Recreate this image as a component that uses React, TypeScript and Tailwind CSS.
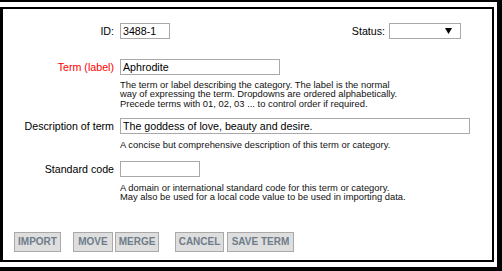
import React from 'react'

const font = { fontFamily: '"Liberation Sans", Arial, sans-serif' }

const Field = ({ label, red, children }: { label: string; red?: boolean; children: React.ReactNode }) => (
    <div className="flex items-center h-[16px]">
        <label className={`w-[117px] text-right text-[10.67px] pr-[6px] ${red ? 'text-[#ff0000]' : 'text-black'}`}>
            {label}
        </label>
        {children}
    </div>
)

const Help = ({ lines }: { lines: string[] }) => (
    <div className="ml-[117px] text-[9.4px] leading-[9.4px] text-[#111]">
        {lines.map((l, i) => (
            <div key={i}>{l}</div>
        ))}
    </div>
)

const Btn = ({ text, w, ml }: { text: string; w: string; ml: string }) => (
    <button className={`${w} ${ml} h-[20px] bg-[#dedede] border border-[#a9a9a9] text-[10px] font-bold text-[#6f7c8a] leading-none`}>
        {text}
    </button>
)

export default function App() {
    return (
        <div className="w-[502px] h-[271px] bg-black pt-[2px] pr-[5px] pb-[4px] overflow-hidden" style={font}>
            <div className="bg-white h-full pt-[5px] pr-[3px] pb-[5px]">
                <div className="h-full border-black border-t-2 border-r-2 border-b-2 border-l-[3px] bg-white pt-[14px]">
                    {/* id + status */}
                    <div className="flex items-center h-[16px]">
                        <Field label="ID:">
                            <input
                                readOnly
                                value="3488-1"
                                className="w-[50px] h-[16px] border border-[#a9a9a9] px-[2px] text-[10.67px] text-black outline-none"
                            />
                        </Field>
                        <div className="ml-auto mr-[31px] flex items-center">
                            <span className="text-[10.67px] mr-[4px]">Status:</span>
                            <div className="w-[72px] h-[16px] border border-[#a9a9a9] flex items-center justify-end pr-[8px]">
                                <svg width="7" height="6" viewBox="0 0 7 6">
                                    <polygon points="0,0 7,0 3.5,6" fill="#000" />
                                </svg>
                            </div>
                        </div>
                    </div>

                    <div className="mt-[20px]">
                        <Field label="Term (label)" red>
                            <input
                                readOnly
                                value="Aphrodite"
                                className="w-[160px] h-[16px] border border-[#a9a9a9] px-[2px] text-[10.67px] text-black outline-none"
                            />
                        </Field>
                    </div>
                    <div className="mt-[5px]">
                        <Help
                            lines={[
                                'The term or label describing the category. The label is the normal',
                                'way of expressing the term. Dropdowns are ordered alphabetically.',
                                'Precede terms with 01, 02, 03 ... to control order if required.',
                            ]}
                        />
                    </div>

                    <div className="mt-[10px]">
                        <Field label="Description of term">
                            <input
                                readOnly
                                value="The goddess of love, beauty and desire."
                                className="w-[350px] h-[16px] border border-[#a9a9a9] px-[2px] text-[10.67px] text-black outline-none"
                            />
                        </Field>
                    </div>
                    <div className="mt-[6px]">
                        <Help lines={['A concise but comprehensive description of this term or category.']} />
                    </div>

                    <div className="mt-[11px]">
                        <Field label="Standard code">
                            <input
                                readOnly
                                value=""
                                className="w-[80px] h-[16px] border border-[#a9a9a9] px-[2px] text-[10.67px] text-black outline-none"
                            />
                        </Field>
                    </div>
                    <div className="mt-[6px]">
                        <Help
                            lines={[
                                'A domain or international standard code for this term or category.',
                                'May also be used for a local code value to be used in importing data.',
                            ]}
                        />
                    </div>

                    <div className="flex mt-[31px] ml-[11px]">
                        <Btn text="IMPORT" w="w-[47px]" ml="ml-0" />
                        <Btn text="MOVE" w="w-[40px]" ml="ml-[12px]" />
                        <Btn text="MERGE" w="w-[44px]" ml="ml-[2px]" />
                        <Btn text="CANCEL" w="w-[49px]" ml="ml-[16px]" />
                        <Btn text="SAVE TERM" w="w-[67px]" ml="ml-[3px]" />
                    </div>
                </div>
            </div>
        </div>
    )
}
